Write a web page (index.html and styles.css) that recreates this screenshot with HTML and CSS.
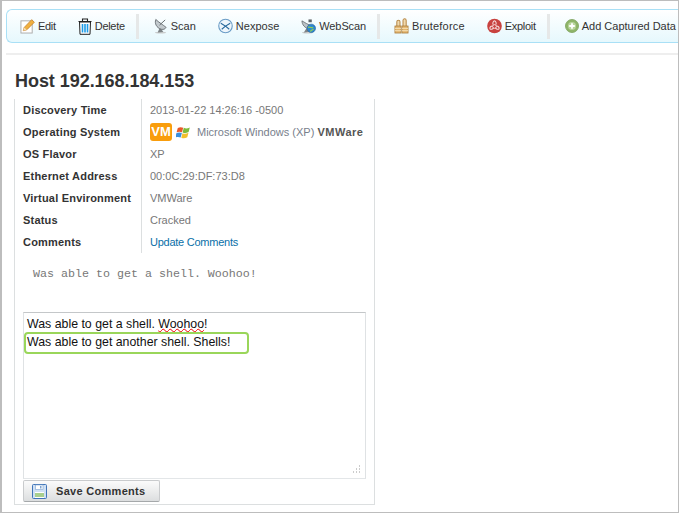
FILE: index.html
```html
<!DOCTYPE html>
<html lang="en">
<head>
  <meta charset="UTF-8">
  <title>Host 192.168.184.153</title>
  <link rel="stylesheet" href="styles.css">
</head>
<body>
  <div class="frame">
    <div class="toolbar">
      <a class="tool tight">
        <svg class="icon" viewBox="0 0 16 16"><rect x="1" y="2.500" width="12" height="13" fill="#fff" stroke="#a9a9a9"/><path d="M3.500 13l1-3.500L12.500 1.200 15.300 4l-8 8z" fill="#f0b040" stroke="#c07a20" stroke-width=".8"/><path d="M3.500 13l1-3.500 2.800 2.500z" fill="#f5dcb0"/></svg>
        <span>Edit</span>
      </a>
      <a class="tool tight">
        <svg class="icon icon-trash" viewBox="0 0 14 17"><path d="M.5 3.500h13M4.500 3V1h5v2" fill="none" stroke="#222" stroke-width="1.100"/><path d="M1.500 4h11l-.5 12.300H2z" fill="#fff" stroke="#222"/><path d="M4.500 6v8.500M7 6v8.500M9.500 6v8.500" stroke="#1c9be8" stroke-width="1.600"/></svg>
        <span>Delete</span>
      </a>
      <span class="sep"></span>
      <a class="tool">
        <svg class="icon" viewBox="0 0 16 16"><ellipse cx="8" cy="15" rx="6" ry="1" fill="#c9cccc"/><path d="M5 15l2.500-6 3.500 5.500z" fill="#7d8386"/><path d="M3 1c-1.500 4 .5 9 6 10.500 2.500.5 4-.5 5-2C11 7 6 4 3 1z" fill="#c3cace" stroke="#5e6468" stroke-width=".9"/><path d="M7 7l6-5.500" stroke="#5e6468"/></svg>
        <span>Scan</span>
      </a>
      <a class="tool">
        <svg class="icon" viewBox="0 0 16 16"><circle cx="8" cy="8" r="7.200" fill="#eef6fc" stroke="#6a9cc6" stroke-width="1.200"/><path d="M3 5l5 3.200L13 5M8 8.200L4 11.500M8 8.200l4 3.300" fill="none" stroke="#27689c" stroke-width="1.200"/></svg>
        <span>Nexpose</span>
      </a>
      <a class="tool snug">
        <svg class="icon" viewBox="0 0 16 16"><ellipse cx="7" cy="15" rx="6" ry="1" fill="#c9cccc"/><path d="M1 2.500c0 4 3 8 8 8.500L11 8C8 6.500 4 4.500 1 2.500z" fill="#bcc3c7" stroke="#5e6468" stroke-width=".8"/><path d="M3 15l3-5 3 4z" fill="#7d8386"/><circle cx="11" cy="10.500" r="4.500" fill="#2d86cf" stroke="#1c5c96" stroke-width=".6"/><path d="M7.500 9.500c2-1 3 1 5.500 0M10 14c1-2 2-1.500 3.500-2.500" stroke="#8ccb58" stroke-width="1.300" fill="none"/><rect x="8" y="1" width="3.500" height="3" fill="#5e6468"/></svg>
        <span>WebScan</span>
      </a>
      <span class="sep"></span>
      <a class="tool wide">
        <svg class="icon" viewBox="0 0 16 16"><path d="M3 8V3.500a1.700 1.700 0 0 1 3.400 0V8M9.600 8V2a1.700 1.700 0 0 1 3.400 0v6" fill="#f0d9ae" stroke="#b98a4a" stroke-width="1.100"/><rect x="1" y="8" width="6.500" height="7.500" fill="#e2b56e" stroke="#a87a3c" stroke-width=".8"/><rect x="8.500" y="8" width="6.500" height="7.500" fill="#e2b56e" stroke="#a87a3c" stroke-width=".8"/><path d="M1 10.500h6.500M8.500 10.500H15M1 13h6.500M8.500 13H15" stroke="#f7e3bb"/></svg>
        <span>Bruteforce</span>
      </a>
      <a class="tool tight">
        <svg class="icon" viewBox="0 0 16 16"><circle cx="8" cy="8" r="7.800" fill="#c8423f"/><circle cx="8" cy="8.500" r="2" fill="none" stroke="#f6dcdc"/><path d="M8 2.500a3 3 0 0 1 1.500 4M8 2.500a3 3 0 0 0-1.500 4M3 11a3 3 0 0 1 3-3M3 11c1.500 1 3 .5 4-1M13 11a3 3 0 0 0-3-3M13 11c-1.500 1-3 .5-4-1" fill="none" stroke="#f6dcdc" stroke-width="1.100"/></svg>
        <span>Exploit</span>
      </a>
      <span class="sep"></span>
      <a class="tool">
        <svg class="icon icon-add" viewBox="0 0 14 14"><circle cx="7" cy="7" r="6.500" fill="#8fb56a" stroke="#7a9f58" stroke-width=".8"/><circle cx="7" cy="7" r="4" fill="#b9d49c"/><path d="M7 4.200v5.600M4.200 7h5.600" stroke="#fff" stroke-width="1.800"/></svg>
        <span>Add Captured Data</span>
      </a>
    </div>
    <div class="rule"></div>

    <h1>Host 192.168.184.153</h1>

    <div class="panel">
      <div class="details">
        <div class="label">Discovery Time</div>
        <div class="value">2013-01-22 14:26:16 -0500</div>
        <div class="label">Operating System</div>
        <div class="value os">
          <span class="vm-badge">VM</span>
          <svg class="win-logo" viewBox="0 1.500 12.500 10.500"><path d="M1.500 3.500c1.500-1 3-1 4.500-.3L5 7C3.500 6.300 2 6.300.5 7z" fill="#e8582a"/><path d="M6.500 3.300c1.500.7 3 .7 5-.3l-1 3.800c-2 1-3.500 1-5 .3z" fill="#7dbb3a"/><path d="M.4 7.600c1.500-.7 3-.7 4.500 0l-1 3.800c-1.500-.7-3-.7-4.500 0z" fill="#3a8fdc"/><path d="M5.400 7.700c1.500.7 3 .7 5-.3l-1 3.800c-2 1-3.500 1-5 .3z" fill="#f2c02c"/></svg>
          <span class="os-name">Microsoft Windows (XP) <b>VMWare</b></span>
        </div>
        <div class="label">OS Flavor</div>
        <div class="value">XP</div>
        <div class="label">Ethernet Address</div>
        <div class="value">00:0C:29:DF:73:D8</div>
        <div class="label">Virtual Environment</div>
        <div class="value">VMWare</div>
        <div class="label">Status</div>
        <div class="value">Cracked</div>
        <div class="label">Comments</div>
        <div class="value"><a class="link">Update Comments</a></div>
      </div>

      <pre class="saved">Was able to get a shell. Woohoo!</pre>

      <div class="editor">
        <div>Was able to get a shell. <span class="misspelled">Woohoo</span>!</div>
        <div>Was able to get another shell. Shells!</div>
        <span class="callout"></span>
        <svg class="grip" viewBox="0 0 10 9"><path d="M8.500 .5v1M8.500 3.500v1M8.500 6.500v1M5.500 3.500v1M5.500 6.500v1M2.500 6.500v1" stroke="#999"/></svg>
      </div>

      <button class="save-btn">
        <svg class="floppy" viewBox="0 0 15 15"><rect x=".5" y=".5" width="14" height="14" rx="1" fill="#cfe0f4" stroke="#3f74b8"/><rect x="3.500" y="1" width="7.500" height="4.500" fill="#fff" stroke="#7ea3d0" stroke-width=".6"/><rect x="8" y="2" width="1.500" height="2.500" fill="#7ea3d0"/><rect x="3" y="8" width="9" height="6" fill="#fff"/><path d="M3 10h9M3 12h9" stroke="#8cc06a" stroke-width="1.400"/></svg>
        Save Comments
      </button>
    </div>
  </div>
</body>
</html>
```

FILE: styles.css
```css
:root {
  --frame: #bdbdbd;
  --panel-line: #dcdfe0;
  --label: #333;
  --value: #777;
  --tool-line: #a9e0f6;
}

* {
  box-sizing: border-box;
}

body {
  margin: 0;
  font-family: "Liberation Sans", Arial, sans-serif;
  font-size: 11px;
  background: #fff;
}

.frame {
  height: 513px;
  padding: 8px 0 0 4px;
  border: 1px solid var(--frame);
  border-left-width: 2px;
  overflow: hidden;
}

.toolbar {
  display: flex;
  align-items: center;
  height: 34px;
  padding-left: 2px;
  border: 1px solid var(--tool-line);
  border-right: none;
  border-radius: 6px 0 0 6px;
  background: linear-gradient(#fff, #e6f8fd);
}

.tool {
  display: flex;
  align-items: center;
  gap: 3px;
  padding: 0 11px;
  color: #333;
  white-space: nowrap;
}

.tool.tight span {
  letter-spacing: -.3px;
}

.tool.snug span {
  letter-spacing: -.1px;
}

.tool.wide span {
  letter-spacing: .2px;
}

.icon {
  width: 15px;
  height: 16px;
  flex: none;
}

.icon-trash {
  width: 14px;
  height: 17px;
}

.icon-add {
  width: 14px;
  margin-left: 1px;
}

.sep {
  width: 3px;
  height: 25px;
  margin: 0 3px 0 0;
  background: #e6e8e8;
  flex: none;
}

.rule {
  height: 2px;
  margin-top: 10px;
  background: #eee;
}

h1 {
  margin: 15px 0 0 9px;
  font-size: 18px;
  line-height: 22px;
  font-weight: bold;
  letter-spacing: -.05px;
  color: #333;
}

.panel {
  width: 361px;
  height: 406px;
  margin: 7px 0 0 8px;
  padding-left: 8px;
  border: 1px solid var(--panel-line);
  border-top: none;
}

.details {
  display: grid;
  grid-template-columns: 118px 1fr;
  grid-auto-rows: 22px;
  align-items: stretch;
}

.label,
.value {
  display: flex;
  align-items: center;
  white-space: nowrap;
}

.label {
  font-weight: bold;
  letter-spacing: .2px;
  color: var(--label);
}

.value {
  padding-left: 8px;
  border-left: 1px solid var(--panel-line);
  color: var(--value);
}

.vm-badge {
  width: 22px;
  height: 18px;
  margin-right: 4px;
  border-radius: 3px;
  background: #f99d0c;
  color: #fff;
  font-size: 13px;
  font-weight: bold;
  line-height: 18px;
  text-align: center;
}

.win-logo {
  width: 15px;
  height: 14px;
  margin-right: 6px;
}

.os-name {
  color: #78808c;
}

.os-name b {
  letter-spacing: .5px;
  color: #555;
}

.link {
  letter-spacing: -.25px;
  color: #0a6fa8;
}

.saved {
  margin: 14px 0 0 10px;
  font-family: "Liberation Mono", "Courier New", monospace;
  font-size: 11.67px;
  line-height: 14px;
  color: #777;
}

.editor {
  position: relative;
  width: 343px;
  height: 167px;
  margin-top: 31px;
  padding: 2px 3px;
  border: 1px solid #c4c7c9;
  border-bottom-color: #e3e6e8;
  border-left-color: #dfe2e4;
  border-right-color: #dfe2e4;
  font-size: 12.35px;
  line-height: 18px;
  color: #111;
}

.misspelled {
  text-decoration: underline wavy #f00000 1px;
  text-underline-offset: 0;
}

.callout {
  position: absolute;
  left: 0;
  top: 19px;
  width: 225px;
  height: 22px;
  border: 2px solid #9ad65a;
  border-radius: 4px;
}

.grip {
  position: absolute;
  right: 4px;
  bottom: 4px;
  width: 10px;
  height: 9px;
}

.save-btn {
  display: flex;
  align-items: center;
  gap: 9px;
  width: 137px;
  height: 22px;
  margin-top: 1px;
  padding: 0 0 0 8px;
  border: 1px solid #c9cbcd;
  border-bottom-color: #a5a8aa;
  border-radius: 2px;
  background: linear-gradient(#fbfbfb, #dcdedf);
  font-family: "Liberation Sans", Arial, sans-serif;
  font-size: 11px;
  font-weight: bold;
  letter-spacing: .3px;
  color: #333;
}

.floppy {
  width: 15px;
  height: 15px;
  flex: none;
}
```
